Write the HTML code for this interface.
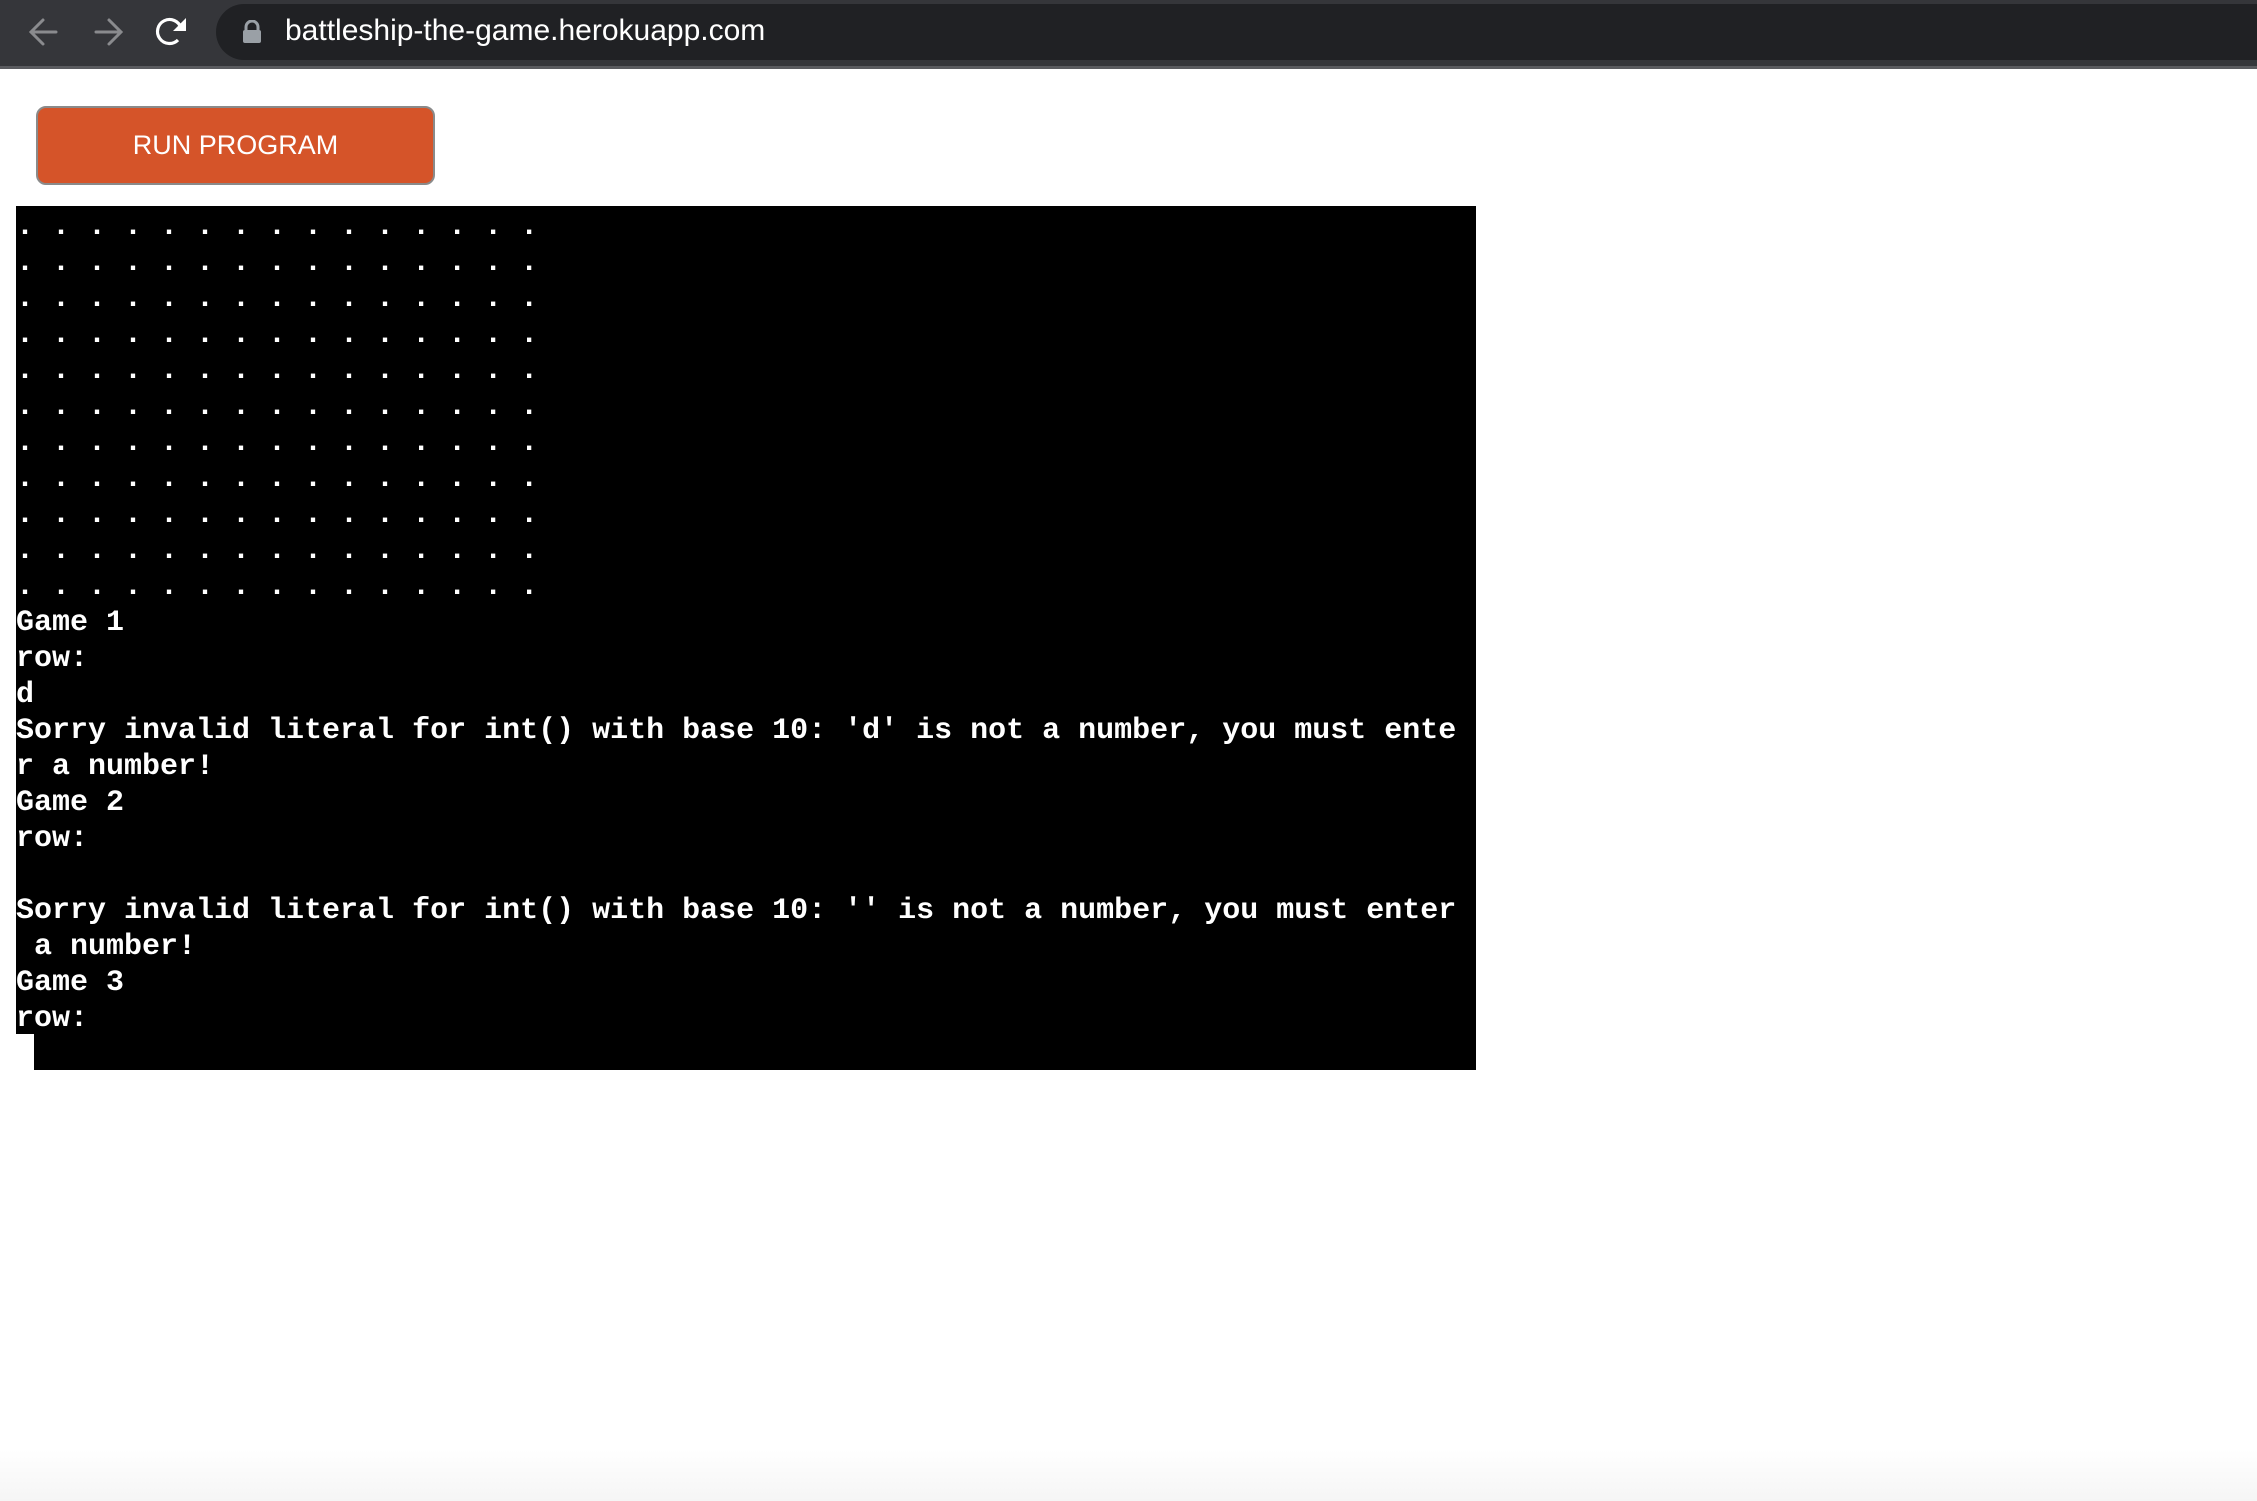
<!DOCTYPE html>
<html><head><meta charset="utf-8">
<style>
html,body{margin:0;padding:0;}
body{width:2257px;height:1501px;background:#fff;position:relative;overflow:hidden;font-family:"Liberation Sans",sans-serif;}
.bar{position:absolute;left:0;top:0;width:2257px;height:66px;background:#35363a;border-bottom:3px solid #5a5b5f;}
.omni{position:absolute;left:216px;top:4px;width:2100px;height:56px;border-radius:28px;background:#202124;}
.url{position:absolute;left:285px;top:11px;color:#fff;font-size:30px;line-height:40px;}
.btn{position:absolute;left:36px;top:106px;width:399px;height:79px;box-sizing:border-box;background:#d55429;border:2px solid #8a8a8a;border-radius:10px;color:#fff;font-size:27px;line-height:75px;text-align:center;}
.term{position:absolute;left:16px;top:206px;width:1460px;height:864px;background:#000;}
pre{margin:0;padding-top:3px;color:#fff;font-family:"Liberation Mono",monospace;font-weight:bold;font-size:30px;line-height:36px;white-space:pre;}
.cur{position:absolute;left:16px;top:1034px;width:18px;height:36px;background:#fff;}
.shadow{position:absolute;left:0;top:1450px;width:2257px;height:51px;background:linear-gradient(#fff,#f5f5f5);}
</style></head><body>
<div class="bar">
  <svg width="216" height="66" style="position:absolute;left:0;top:0">
    <g stroke="#8a8b8e" stroke-width="3" fill="none" stroke-linecap="round">
      <path d="M56 32H32M43 20L31 32L43 44"/>
      <path d="M96 32H120M109 20L121 32L109 44"/>
    </g>
    <path d="M181 28A12 12 0 1 0 178 40" stroke="#fff" stroke-width="3.2" fill="none"/>
    <path d="M186 18V31H173Z" fill="#fff"/>
  </svg>
  <div class="omni"></div>
  <svg width="20" height="24" style="position:absolute;left:242px;top:20px">
    <path d="M4 10V7A6 6 0 0 1 16 7V10" stroke="#9aa0a6" stroke-width="3" fill="none"/>
    <rect x="1" y="10" width="18" height="13" rx="2" fill="#9aa0a6"/>
  </svg>
  <div class="url">battleship-the-game.herokuapp.com</div>
</div>
<div class="btn">RUN PROGRAM</div>
<div class="term"><pre>. . . . . . . . . . . . . . . 
. . . . . . . . . . . . . . . 
. . . . . . . . . . . . . . . 
. . . . . . . . . . . . . . . 
. . . . . . . . . . . . . . . 
. . . . . . . . . . . . . . . 
. . . . . . . . . . . . . . . 
. . . . . . . . . . . . . . . 
. . . . . . . . . . . . . . . 
. . . . . . . . . . . . . . . 
. . . . . . . . . . . . . . . 
Game 1
row:
d
Sorry invalid literal for int() with base 10: 'd' is not a number, you must ente
r a number!
Game 2
row:

Sorry invalid literal for int() with base 10: '' is not a number, you must enter
 a number!
Game 3
row:</pre></div>
<div class="cur"></div>
<div class="shadow"></div>
</body></html>
